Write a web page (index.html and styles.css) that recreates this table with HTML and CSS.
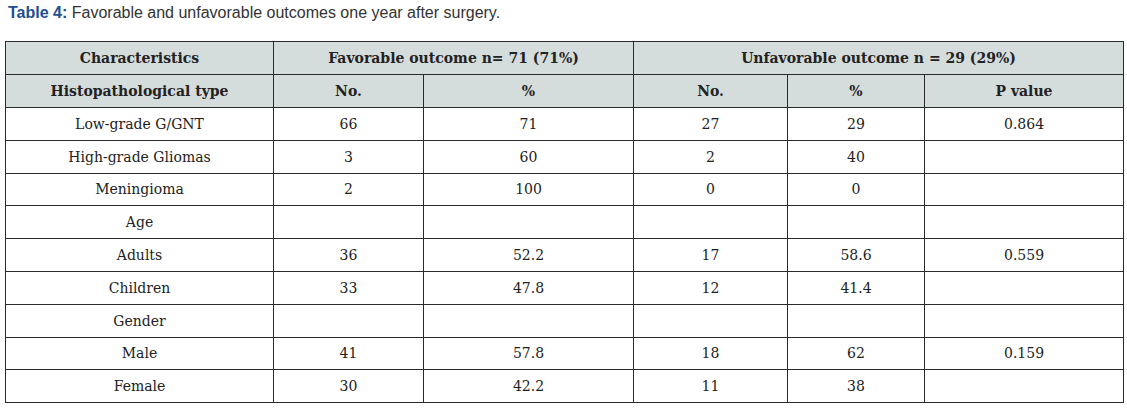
FILE: index.html
```html
<!DOCTYPE html>
<html>
<head>
<meta charset="utf-8">
<link rel="stylesheet" href="styles.css">
</head>
<body>
<p class="caption"><span class="label">Table 4:</span> Favorable and unfavorable outcomes one year after surgery.</p>
<table class="data">
<colgroup>
<col class="c1"><col class="c2"><col class="c3"><col class="c4"><col class="c5"><col class="c6">
</colgroup>
<thead>
<tr class="head"><th>Characteristics</th><th colspan="2">Favorable outcome n= 71 (71%)</th><th colspan="3">Unfavorable outcome n = 29 (29%)</th></tr>
<tr class="head"><th>Histopathological type</th><th>No.</th><th>%</th><th>No.</th><th>%</th><th>P value</th></tr>
</thead>
<tbody>
<tr><td>Low-grade G/GNT</td><td>66</td><td>71</td><td>27</td><td>29</td><td>0.864</td></tr>
<tr><td>High-grade Gliomas</td><td>3</td><td>60</td><td>2</td><td>40</td><td></td></tr>
<tr><td>Meningioma</td><td>2</td><td>100</td><td>0</td><td>0</td><td></td></tr>
<tr><td>Age</td><td></td><td></td><td></td><td></td><td></td></tr>
<tr><td>Adults</td><td>36</td><td>52.2</td><td>17</td><td>58.6</td><td>0.559</td></tr>
<tr><td>Children</td><td>33</td><td>47.8</td><td>12</td><td>41.4</td><td></td></tr>
<tr><td>Gender</td><td></td><td></td><td></td><td></td><td></td></tr>
<tr><td>Male</td><td>41</td><td>57.8</td><td>18</td><td>62</td><td>0.159</td></tr>
<tr><td>Female</td><td>30</td><td>42.2</td><td>11</td><td>38</td><td></td></tr>
</tbody>
</table>
</body>
</html>
```
FILE: styles.css
```css
html, body {
  margin: 0;
  padding: 0;
  background: #ffffff;
}
.caption {
  margin: 0;
  padding: 3px 0 0 8px;
  height: 38px;
  box-sizing: border-box;
  font-family: "Liberation Sans", Arial, sans-serif;
  font-size: 16px;
  line-height: 20px;
  color: #333333;
}
.label {
  color: #1d4f91;
  font-weight: bold;
}
.data {
  margin-left: 5px;
  margin-top: 3px;
  border-collapse: collapse;
  width: 1118px;
  table-layout: fixed;
  font-family: "DejaVu Serif", "Liberation Serif", serif;
  font-size: 14px;
  color: #222222;
}
.c1 { width: 268px; }
.c2 { width: 150px; }
.c3 { width: 210px; }
.c4 { width: 154px; }
.c5 { width: 137px; }
.c6 { width: 199px; }
.data th, .data td {
  border: 1px solid #2a2a2a;
  text-align: center;
  padding: 0;
  vertical-align: middle;
}
.data th {
  background: #d5dcdc;
  font-weight: bold;
  height: 32px;
}
.data td {
  height: 31.8px;
}
```
